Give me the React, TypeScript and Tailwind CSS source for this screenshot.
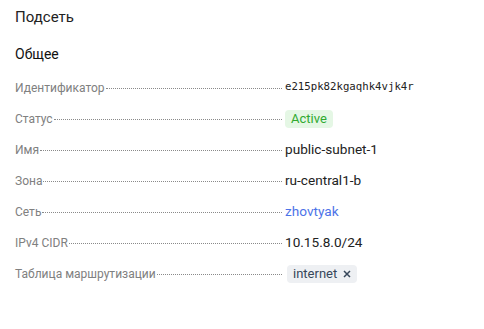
import React from 'react';

type Row = { label: string; value: React.ReactNode };

const rows: Row[] = [
  {
    label: 'Идентификатор',
    value: <span className="font-['DejaVu_Sans_Mono',monospace] text-[10.7px] text-[#222]">e215pk82kgaqhk4vjk4r</span>,
  },
  {
    label: 'Статус',
    value: <span className="inline-flex h-[18px] items-center rounded-[4px] bg-[#e5f7e5] px-[6px] text-[13px] text-[#30aa30]">Active</span>,
  },
  { label: 'Имя', value: 'public-subnet-1' },
  { label: 'Зона', value: 'ru-central1-b' },
  { label: 'Сеть', value: <span className="text-[#4d73e8]">zhovtyak</span> },
  { label: 'IPv4 CIDR', value: '10.15.8.0/24' },
  {
    label: 'Таблица маршрутизации',
    value: (
      <span className="ml-[2px] inline-flex h-[18px] items-center gap-[6px] rounded-[4px] bg-[#eef0f3] px-[6px] text-[13px] text-[#37475a]">
        internet
        <svg width="8" height="8" viewBox="0 0 8 8" className="text-[#37475a]">
          <path d="M1 1 L7 7 M7 1 L1 7" stroke="currentColor" strokeWidth="1.5" />
        </svg>
      </span>
    ),
  },
];

export default function App() {
  return (
    <div className="w-[484px] h-[329px] bg-white px-[15px] pt-[7px] font-['Roboto','Noto_Sans',sans-serif] text-[#222]">
      <h1 className="text-[15px] leading-[20px]">Подсеть</h1>
      <h2 className="mt-[17px] text-[14px] leading-[20px] font-normal text-[#111]">Общее</h2>
      <div className="mt-[8px] flex flex-col text-[13.6px]">
        {rows.map((r) => (
          <div key={r.label} className="flex h-[31px] items-center">
            <div className="flex w-[270px] items-baseline pr-[2px]">
              <span className="text-[12px] text-[#808080] whitespace-nowrap">{r.label}</span>
              <span className="mx-[1px] flex-1 border-b border-dotted border-[#8a8a8a] translate-y-[-3px]" />
            </div>
            <div className="flex items-center">{r.value}</div>
          </div>
        ))}
      </div>
    </div>
  );
}
